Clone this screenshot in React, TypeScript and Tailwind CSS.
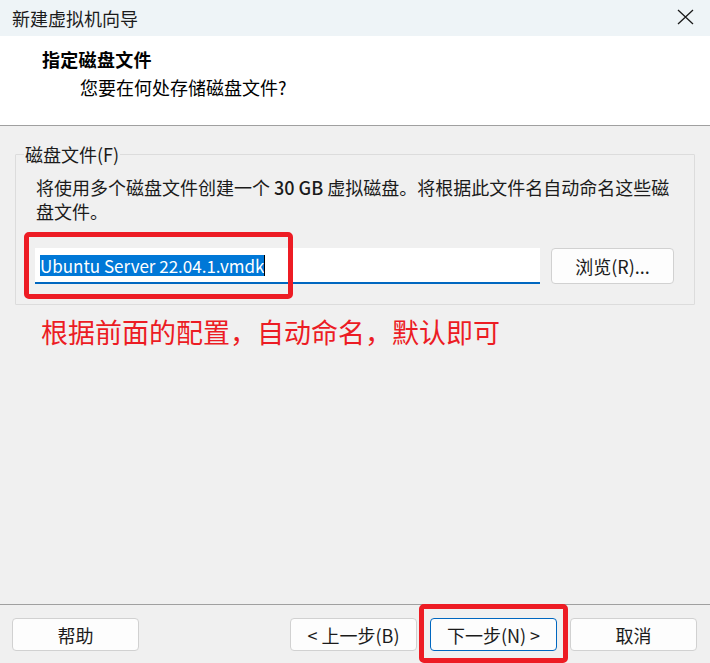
const font = { fontFamily: '"Noto Sans CJK SC", "Noto Sans", sans-serif' }

function WinButton({ label, primary, wide = true }: { label: string; primary?: boolean; wide?: boolean }) {
  return (
    <button
      className={
        'flex h-[33px] items-center justify-center rounded-[4px] border bg-[#fdfdfd] text-[18px] leading-none text-[#1b1b1b] ' +
        (wide ? 'w-[127px] ' : 'h-[36px] w-[123px] ') +
        (primary ? 'border-[#0067c0]' : 'border-[#d1d1d1]')
      }
    >
      {label}
    </button>
  )
}

export default function App() {
  return (
    <div className="relative flex h-[663px] w-[710px] flex-col overflow-hidden bg-[#f0f0f0] text-[#1b1b1b]" style={font}>
      {/* title bar */}
      <div className="flex h-[36px] shrink-0 items-center justify-between bg-[#eef4f7] pl-[12px] pr-[16px]">
        <span className="text-[18px] leading-none">新建虚拟机向导</span>
        <svg width="17" height="16" viewBox="0 0 17 16" className="mt-[-2px]">
          <path d="M1 1 L16 15 M16 1 L1 15" stroke="#1b1b1b" strokeWidth="1.3" fill="none" />
        </svg>
      </div>

      {/* header */}
      <div className="h-[90px] shrink-0 border-b border-[#a0a0a0] bg-white pt-[11px]">
        <div className="pl-[42px] text-[18px] font-bold leading-[24px] tracking-[0.3px] text-black">指定磁盘文件</div>
        <div className="mt-[4px] pl-[80px] text-[18px] leading-[24px] text-black">您要在何处存储磁盘文件?</div>
      </div>

      {/* body */}
      <div className="flex-1 px-[15px]">
        <fieldset className="mt-[17px] rounded-[1px] border border-[#dcdcdc] px-0 pb-[20px]">
          <legend className="ml-[8px] px-[1px] text-[18px] leading-[22px]">磁盘文件(F)</legend>
          <div className="pl-[19px] pr-[20px] pt-[10px]">
            <p className="whitespace-nowrap pl-[1px] text-[18px] leading-[24px]">
              将使用多个磁盘文件创建一个 <span className="font-medium">30 GB</span> 虚拟磁盘。将根据此文件名自动命名这些磁
              <br />
              盘文件。
            </p>
            <div className="mt-[25px] flex items-center gap-[11px]">
              <div className="flex h-[36px] w-[505px] items-center border-b-2 border-[#0067c0] bg-white pl-[5px]">
                <span className="bg-[#0078d7] text-[17px] leading-[21px] text-white">Ubuntu Server 22.04.1.vmdk</span>
                <span className="h-[21px] w-px bg-black" />
              </div>
              <WinButton label="浏览(R)..." wide={false} />
            </div>
          </div>
        </fieldset>
        <p className="ml-[26px] mt-[9px] text-[27px] leading-[36px] text-[#ec1c24]">根据前面的配置，自动命名，默认即可</p>
      </div>

      {/* footer */}
      <div className="flex h-[59px] shrink-0 items-start justify-between border-t border-[#a0a0a0] pl-[12px] pr-[13px] pt-[13px]">
        <WinButton label="帮助" />
        <div className="flex gap-[13px]">
          <WinButton label="< 上一步(B)" />
          <WinButton label="下一步(N) >" primary />
          <WinButton label="取消" />
        </div>
      </div>

      {/* annotation boxes */}
      <div className="absolute left-[24px] top-[232px] h-[67px] w-[269px] rounded-[5px] border-[5px] border-[#ed1c24]" />
      <div className="absolute left-[419px] top-[604px] h-[59px] w-[149px] rounded-[5px] border-[5px] border-[#ed1c24]" />
    </div>
  )
}
